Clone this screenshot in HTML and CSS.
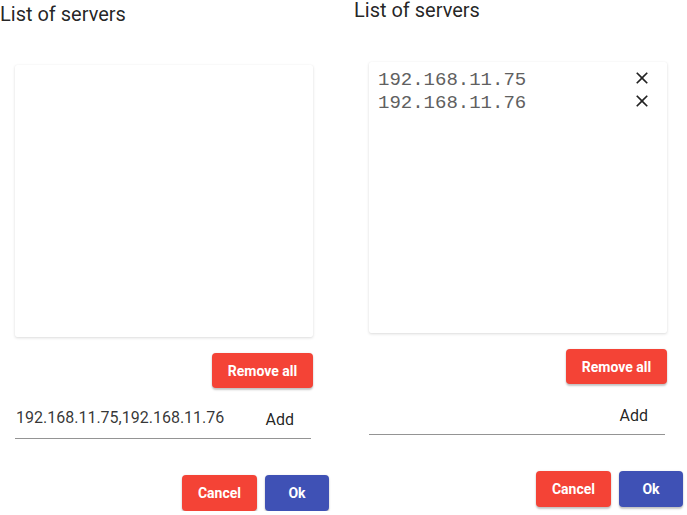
FILE: index.html
```html
<!DOCTYPE html>
<html>
<head>
<meta charset="utf-8">
<link rel="stylesheet" href="styles.css">
</head>
<body>
<div class="page">
  <section class="panel panel-down">
    <h2 class="title">List of servers</h2>
    <div class="card"></div>
    <div class="remove-row"><button class="btn btn-red btn-remove">Remove all</button></div>
    <div class="input-row">
      <span class="input-text">192.168.11.75,192.168.11.76</span>
      <span class="add">Add</span>
    </div>
    <div class="actions">
      <button class="btn btn-red">Cancel</button>
      <button class="btn btn-blue">Ok</button>
    </div>
  </section>
  <section class="panel panel-up">
    <h2 class="title">List of servers</h2>
    <div class="card">
      <div class="item">
        <span class="ip">192.168.11.75</span>
        <svg class="close" viewBox="0 0 24 24"><path d="M19 6.41L17.59 5 12 10.59 6.41 5 5 6.41 10.59 12 5 17.59 6.41 19 12 13.41 17.59 19 19 17.59 13.41 12z"/></svg>
      </div>
      <div class="item">
        <span class="ip">192.168.11.76</span>
        <svg class="close" viewBox="0 0 24 24"><path d="M19 6.41L17.59 5 12 10.59 6.41 5 5 6.41 10.59 12 5 17.59 6.41 19 12 13.41 17.59 19 19 17.59 13.41 12z"/></svg>
      </div>
    </div>
    <div class="remove-row"><button class="btn btn-red btn-remove">Remove all</button></div>
    <div class="input-row">
      <span class="input-text"></span>
      <span class="add">Add</span>
    </div>
    <div class="actions">
      <button class="btn btn-red">Cancel</button>
      <button class="btn btn-blue">Ok</button>
    </div>
  </section>
</div>
</body>
</html>
```
FILE: styles.css
```css
* { box-sizing: border-box; }
html, body { margin: 0; padding: 0; background: #fff; }
body { font-family: Roboto, "Liberation Sans", sans-serif; color: rgba(0,0,0,0.87); }
.page { display: flex; align-items: flex-start; gap: 25px; }
.panel { width: 329px; display: flex; flex-direction: column; }
.panel-down { padding-top: 4px; }
.title {
  margin: 0;
  font-size: 20px;
  font-weight: 400;
  line-height: 20px;
  height: 20px;
}
.card {
  margin: 41px 0 0 15px;
  width: 298px;
  height: 272px;
  background: #fff;
  border-radius: 2px;
  box-shadow: 0 1px 3px rgba(0,0,0,0.14), 0 0 1px rgba(0,0,0,0.06);
  padding: 7px 15px 0 9px;
}
.panel-up .card { margin-top: 42px; height: 271px; }
.item { display: flex; justify-content: space-between; align-items: flex-start; height: 23px; }
.ip {
  font-family: "Liberation Mono", "Courier New", monospace;
  font-size: 19px;
  line-height: 23px;
  color: #606060;
}
.close { width: 20px; height: 20px; margin-top: -1px; fill: #222; display: block; }
.remove-row { display: flex; justify-content: flex-end; width: 313px; margin-top: 16px; }
.btn {
  border: none;
  border-radius: 4px;
  height: 36px;
  padding: 0 16px;
  min-width: 64px;
  white-space: nowrap;
  font-family: Roboto, "Liberation Sans", sans-serif;
  font-size: 14px;
  font-weight: 700;
  color: #fff;
  box-shadow: 0 2px 2px rgba(0,0,0,0.22), 0 0 2px rgba(0,0,0,0.1);
  cursor: pointer;
}
.btn-remove { height: 35px; width: 101px; padding: 0; }
.btn-red { background: #f44336; }
.btn-blue { background: #3f51b5; }
.input-row {
  display: flex;
  justify-content: space-between;
  align-items: flex-start;
  margin: 20px 0 0 15px;
  width: 296px;
  height: 31px;
  border-bottom: 1px solid #949494;
}
.input-text { font-size: 16px; line-height: 20px; padding-left: 1px; color: rgba(0,0,0,0.8); }
.add { font-size: 16px; line-height: 20px; margin-top: 2px; padding-right: 17px; }
.actions { display: flex; justify-content: flex-end; gap: 8px; margin-top: 36px; }
```
